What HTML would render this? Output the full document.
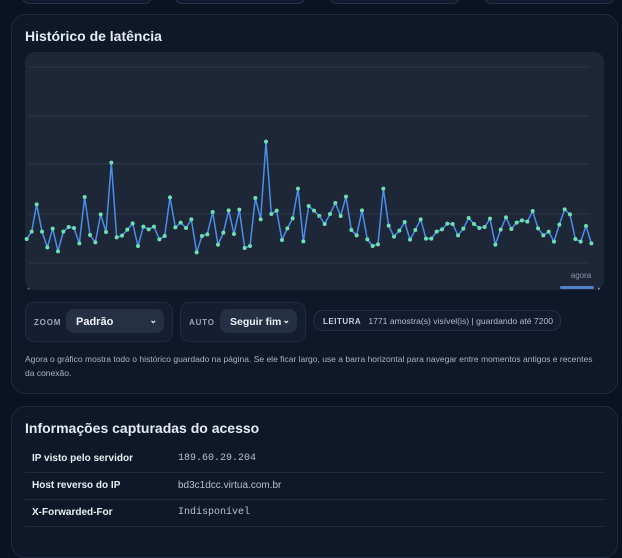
<!DOCTYPE html>
<html><head><meta charset="utf-8"><style>
body{margin:0;width:622px;height:534px;overflow:hidden;background:#0b1322;font-family:"Liberation Sans",sans-serif;position:relative}
.top{position:absolute;top:-10px;height:12px;border:1px solid #26324a;border-radius:8px;background:#111a2c}
.card{position:absolute;left:11px;width:605px;background:#0f1829;border:1px solid #1e2a40;border-radius:14px}
h2{position:absolute;left:13px;margin:0;color:#e6ebf3;font-size:14px;font-weight:bold}
.chart{position:absolute;left:13px;top:37px;width:579px;height:238px;background:#1e2738;border-radius:10px}
.grp{position:absolute;top:287px;height:38px;background:#141e30;border:1px solid #1f2b40;border-radius:9px}
.lbl{position:absolute;top:15px;font-size:8px;font-weight:bold;letter-spacing:.8px;color:#9aa6b8}
.sel{position:absolute;top:6px;height:24px;background:#253045;border-radius:8px;color:#f0f3f8;font-size:11px;font-weight:bold;line-height:26px;padding-left:10px;box-sizing:border-box;white-space:nowrap}
.sel span{position:absolute;right:7px;top:-2px;font-size:9px}
.pill{position:absolute;left:301px;top:295px;width:248px;height:21px;border:1px solid #24304a;background:#121c2e;border-radius:10px;font-size:8.6px;color:#b3bdcc;line-height:20px;box-sizing:border-box;padding-left:9px;white-space:nowrap;overflow:hidden}
.note{position:absolute;left:13px;top:337px;width:600px;font-size:8.5px;line-height:14px;color:#aab4c3;white-space:nowrap}
.row{position:absolute;left:13px;width:580px;height:27px;border-bottom:1px solid #1f2a3e}
.row b{position:absolute;left:7px;top:8px;font-size:10px;color:#e8edf4}
.row i{position:absolute;left:153px;top:8px;font-style:normal;font-size:10px;color:#b6c0cf}
.mono{font-family:"Liberation Mono",monospace!important}
</style></head><body>
<div class="top" style="left:22px;width:128px"></div>
<div class="top" style="left:175px;width:128px"></div>
<div class="top" style="left:330px;width:128px"></div>
<div class="top" style="left:484px;width:128px"></div>

<div class="card" style="top:14px;height:378px">
<h2 style="top:13px">Histórico de latência</h2>
<div class="chart"></div>
<div class="grp" style="left:13px;width:146px"><div class="lbl" style="left:8px">ZOOM</div><div class="sel" style="left:40px;width:98px">Padrão<span>⌄</span></div></div>
<div class="grp" style="left:168px;width:124px"><div class="lbl" style="left:8px">AUTO</div><div class="sel" style="left:39px;width:77px;font-size:10.5px">Seguir fim<span>⌄</span></div></div>
<div class="pill"><b style="color:#c7cfdb;letter-spacing:.5px;font-size:8px">LEITURA</b>&nbsp;&nbsp; 1771 amostra(s) visível(is) | guardando até 7200</div>
<div class="note">Agora o gráfico mostra todo o histórico guardado na página. Se ele ficar largo, use a barra horizontal para navegar entre momentos antigos e recentes<br>da conexão.</div>
</div>

<svg style="position:absolute;left:0;top:0" width="622" height="534">
<g stroke="#2d374a" stroke-width="1">
<line x1="29" y1="67" x2="590" y2="67"/><line x1="29" y1="116" x2="590" y2="116"/><line x1="29" y1="164" x2="590" y2="164"/><line x1="29" y1="214" x2="590" y2="214"/><line x1="29" y1="263" x2="590" y2="263"/></g>
<text x="581" y="278" font-size="8" fill="#8a95a8" text-anchor="middle" font-family="Liberation Sans">agora</text>
<rect x="560" y="286" width="34" height="3" rx="1.5" fill="#4f80c8"/>
<text x="598" y="290" font-size="5" fill="#8a95a8">▸</text>
<text x="27" y="290" font-size="5" fill="#5a6478">◂</text>
<g transform="translate(20,130) scale(0.33333)">
<polyline fill="none" stroke="#4a8ee8" stroke-width="4.5" points="20,327 35,305 50,223 66,305 82,352 98,296 114,364 130,305 146,291 162,294 178,340 194,201 210,315 226,337 242,253 258,306 274,98 290,322 306,317 322,299 338,280 354,348 370,290 386,298 402,290 418,328 434,318 450,202 466,292 482,278 498,294 514,268 530,367 546,318 562,313 578,246 594,344 610,308 626,241 642,312 658,239 674,354 690,348 706,204 722,268 738,35 754,252 770,242 786,330 802,295 818,265 834,176 850,334 866,228 882,242 898,258"/>
<g fill="#6ee0b0">
<circle cx="20" cy="327" r="6"/><circle cx="35" cy="305" r="6"/><circle cx="50" cy="223" r="6"/><circle cx="66" cy="305" r="6"/><circle cx="82" cy="352" r="6"/><circle cx="98" cy="296" r="6"/><circle cx="114" cy="364" r="6"/><circle cx="130" cy="305" r="6"/><circle cx="146" cy="291" r="6"/><circle cx="162" cy="294" r="6"/><circle cx="178" cy="340" r="6"/><circle cx="194" cy="201" r="6"/><circle cx="210" cy="315" r="6"/><circle cx="226" cy="337" r="6"/><circle cx="242" cy="253" r="6"/><circle cx="258" cy="306" r="6"/><circle cx="274" cy="98" r="6"/><circle cx="290" cy="322" r="6"/><circle cx="306" cy="317" r="6"/><circle cx="322" cy="299" r="6"/><circle cx="338" cy="280" r="6"/><circle cx="354" cy="348" r="6"/><circle cx="370" cy="290" r="6"/><circle cx="386" cy="298" r="6"/><circle cx="402" cy="290" r="6"/><circle cx="418" cy="328" r="6"/><circle cx="434" cy="318" r="6"/><circle cx="450" cy="202" r="6"/><circle cx="466" cy="292" r="6"/><circle cx="482" cy="278" r="6"/><circle cx="498" cy="294" r="6"/><circle cx="514" cy="268" r="6"/><circle cx="530" cy="367" r="6"/><circle cx="546" cy="318" r="6"/><circle cx="562" cy="313" r="6"/><circle cx="578" cy="246" r="6"/><circle cx="594" cy="344" r="6"/><circle cx="610" cy="308" r="6"/><circle cx="626" cy="241" r="6"/><circle cx="642" cy="312" r="6"/><circle cx="658" cy="239" r="6"/><circle cx="674" cy="354" r="6"/><circle cx="690" cy="348" r="6"/><circle cx="706" cy="204" r="6"/><circle cx="722" cy="268" r="6"/><circle cx="738" cy="35" r="6"/><circle cx="754" cy="252" r="6"/><circle cx="770" cy="242" r="6"/><circle cx="786" cy="330" r="6"/><circle cx="802" cy="295" r="6"/><circle cx="818" cy="265" r="6"/><circle cx="834" cy="176" r="6"/><circle cx="850" cy="334" r="6"/><circle cx="866" cy="228" r="6"/><circle cx="882" cy="242" r="6"/><circle cx="898" cy="258" r="6"/>
</g></g>
<g transform="translate(310,130) scale(0.33333)">
<polyline fill="none" stroke="#4a8ee8" stroke-width="4.5" points="28,258 44,282 60,252 76,219 92,258 108,200 124,300 140,316 156,241 172,328 188,348 204,343 220,176 236,287 252,320 268,302 284,276 300,329 316,300 332,268 348,326 364,326 380,305 396,298 412,281 428,282 444,316 460,296 476,264 492,282 508,294 524,291 540,266 556,344 572,299 588,262 604,297 620,278 636,271 652,275 668,243 684,295 700,316 716,305 732,335 748,284 764,238 780,253 796,327 812,335 828,288 844,340"/>
<g fill="#6ee0b0">
<circle cx="44" cy="282" r="6"/><circle cx="60" cy="252" r="6"/><circle cx="76" cy="219" r="6"/><circle cx="92" cy="258" r="6"/><circle cx="108" cy="200" r="6"/><circle cx="124" cy="300" r="6"/><circle cx="140" cy="316" r="6"/><circle cx="156" cy="241" r="6"/><circle cx="172" cy="328" r="6"/><circle cx="188" cy="348" r="6"/><circle cx="204" cy="343" r="6"/><circle cx="220" cy="176" r="6"/><circle cx="236" cy="287" r="6"/><circle cx="252" cy="320" r="6"/><circle cx="268" cy="302" r="6"/><circle cx="284" cy="276" r="6"/><circle cx="300" cy="329" r="6"/><circle cx="316" cy="300" r="6"/><circle cx="332" cy="268" r="6"/><circle cx="348" cy="326" r="6"/><circle cx="364" cy="326" r="6"/><circle cx="380" cy="305" r="6"/><circle cx="396" cy="298" r="6"/><circle cx="412" cy="281" r="6"/><circle cx="428" cy="282" r="6"/><circle cx="444" cy="316" r="6"/><circle cx="460" cy="296" r="6"/><circle cx="476" cy="264" r="6"/><circle cx="492" cy="282" r="6"/><circle cx="508" cy="294" r="6"/><circle cx="524" cy="291" r="6"/><circle cx="540" cy="266" r="6"/><circle cx="556" cy="344" r="6"/><circle cx="572" cy="299" r="6"/><circle cx="588" cy="262" r="6"/><circle cx="604" cy="297" r="6"/><circle cx="620" cy="278" r="6"/><circle cx="636" cy="271" r="6"/><circle cx="652" cy="275" r="6"/><circle cx="668" cy="243" r="6"/><circle cx="684" cy="295" r="6"/><circle cx="700" cy="316" r="6"/><circle cx="716" cy="305" r="6"/><circle cx="732" cy="335" r="6"/><circle cx="748" cy="284" r="6"/><circle cx="764" cy="238" r="6"/><circle cx="780" cy="253" r="6"/><circle cx="796" cy="327" r="6"/><circle cx="812" cy="335" r="6"/><circle cx="828" cy="288" r="6"/><circle cx="844" cy="340" r="6"/>
</g></g>
</svg>

<div class="card" style="top:406px;height:150px">
<h2 style="top:13px">Informações capturadas do acesso</h2>
<div class="row" style="top:38px"><b>IP visto pelo servidor</b><i class="mono">189.60.29.204</i></div>
<div class="row" style="top:65px"><b>Host reverso do IP</b><i>bd3c1dcc.virtua.com.br</i></div>
<div class="row" style="top:92px"><b>X-Forwarded-For</b><i class="mono">Indisponível</i></div>
</div>
</body></html>
